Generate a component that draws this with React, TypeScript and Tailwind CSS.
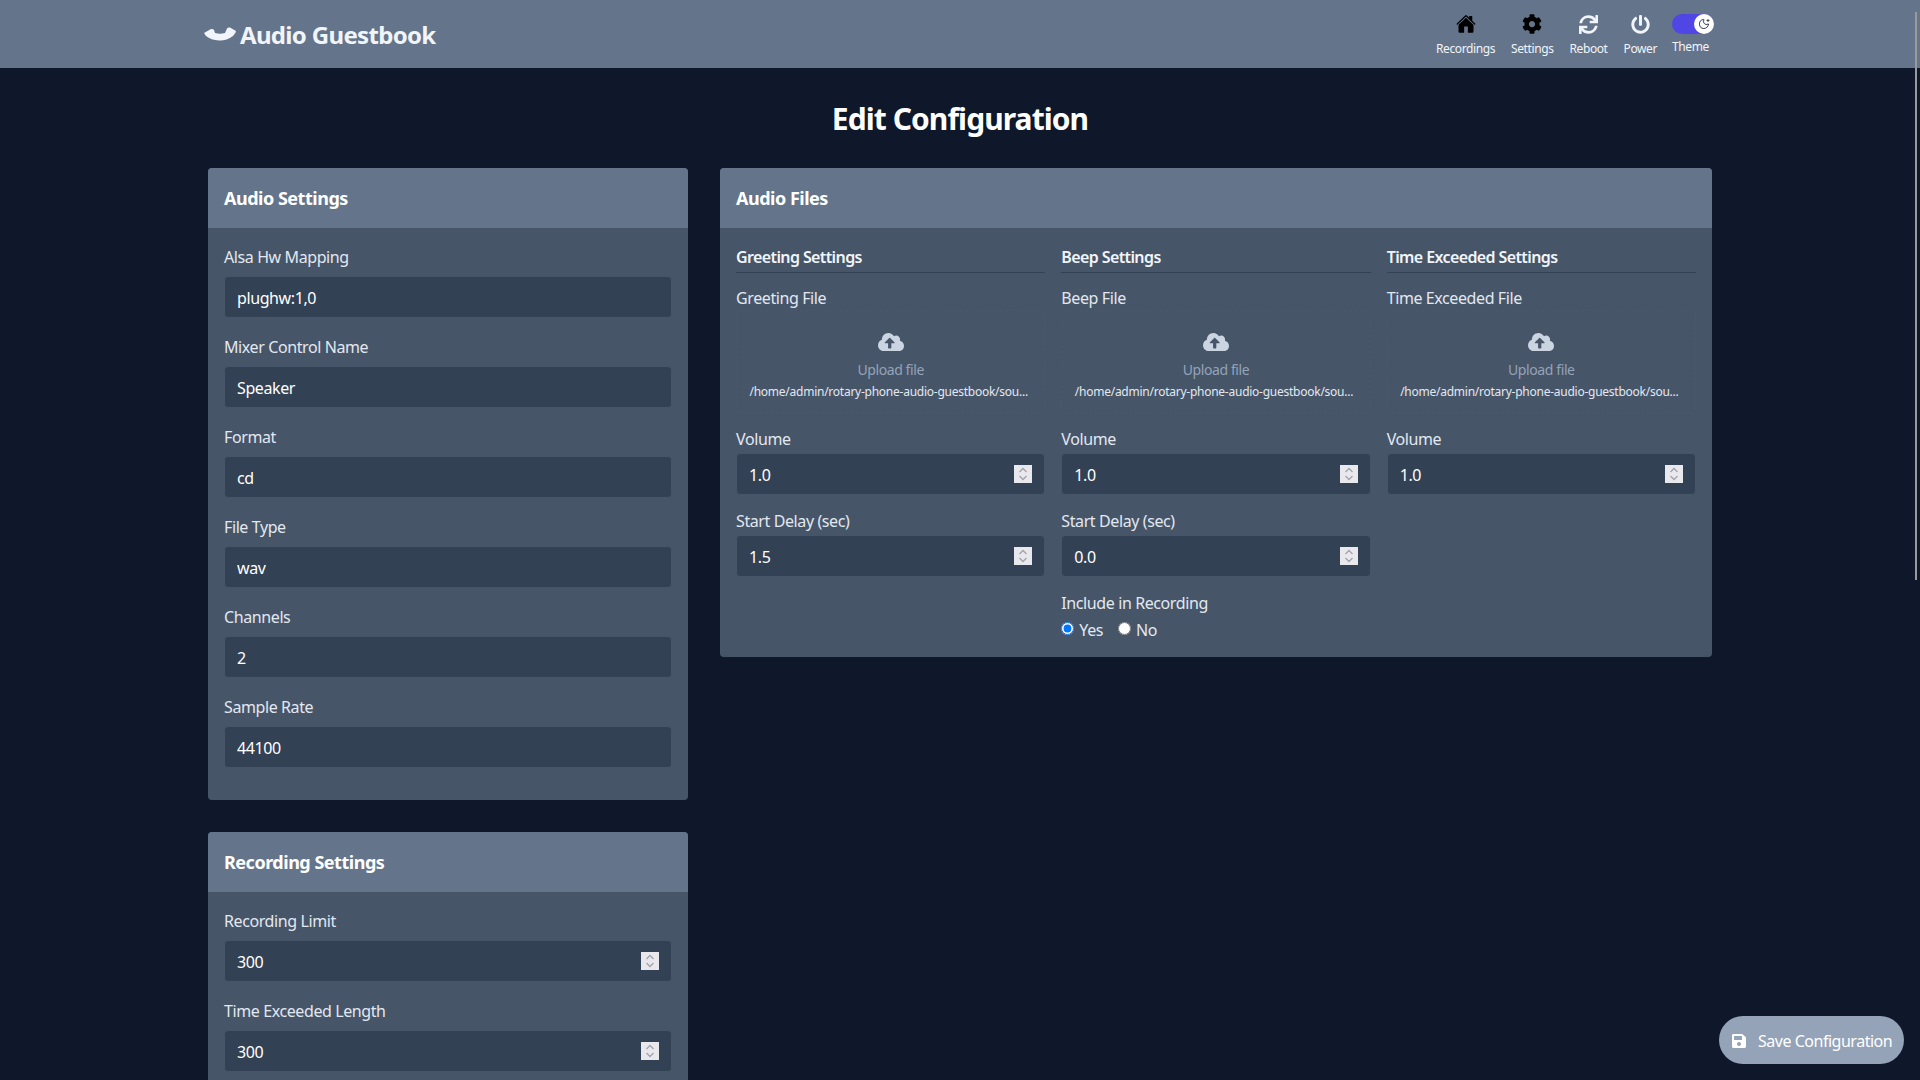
import React from "react";
import { FaCog, FaSync, FaPowerOff, FaSave, FaCloudUploadAlt } from "react-icons/fa";
import { IoHome } from "react-icons/io5";
import { MoonStar } from "lucide-react";

function Spinner() {
  return (
    <span className="absolute right-[13px] top-1/2 -translate-y-1/2 w-[18px] h-[18px] bg-[#e9e9ed] flex items-center justify-center">
      <svg width="12" height="16" viewBox="0 0 12 16" fill="none" stroke="#a3a3ab" strokeWidth="1.3">
        <path d="M2.5 6 L6 2.5 L9.5 6" />
        <path d="M2.5 10 L6 13.5 L9.5 10" />
      </svg>
    </span>
  );
}

function Field({ label, value, spin, gap = "pt-[1px] mb-[7px]", after = "mb-4" }: { label: string; value: string; spin?: boolean; gap?: string; after?: string }) {
  return (
    <div className={after}>
      <label className={`block text-[#e2e8f0] text-base leading-6 ${gap}`}>{label}</label>
      <div className="relative h-[42px]">
        <input readOnly value={value} className="w-full h-[42px] rounded bg-[#334155] border border-[#475569] px-3 pt-[2px] text-white text-base outline-none" />
        {spin && <Spinner />}
      </div>
    </div>
  );
}

function Card({ title, children }: { title: string; children: React.ReactNode }) {
  return (
    <section className="rounded overflow-hidden bg-[#475569]">
      <h2 className="bg-[#64748b] p-4 text-lg leading-7 font-bold tracking-[-0.027em] text-white">{title}</h2>
      <div className="p-4">{children}</div>
    </section>
  );
}

function Column({ title, file, delay, children }: { title: string; file: string; delay?: string; children?: React.ReactNode }) {
  return (
    <div>
      <h3 className="text-base leading-6 font-semibold tracking-[-0.038em] text-[#f1f5f9] pt-[1px] pb-[3px] border-b border-[#334155] mb-3">{title}</h3>
      <label className="block text-[#e2e8f0] text-base leading-6 pt-[1px]">{file}</label>
      <div className="h-[103px] mb-[14px] flex flex-col items-center rounded border border-dashed border-[#4b586b]">
        <FaCloudUploadAlt className="text-[#cbd5e1] mt-[18px]" size={26} />
        <span className="text-sm leading-5 text-[#94a3b8] mt-[5px]">Upload file</span>
        <span className="text-xs leading-4 tracking-[-0.021em] text-[#e2e8f0] mt-[4px] pr-[4px]">/home/admin/rotary-phone-audio-guestbook/sou...</span>
      </div>
      <Field label="Volume" value="1.0" spin gap="mb-[2px]" after="mb-3.5" />
      {delay && <Field label="Start Delay (sec)" value={delay} spin gap="mb-[2px]" after="mb-3.5" />}
      {children}
    </div>
  );
}

function NavItem({ icon, label }: { icon: React.ReactNode; label: string }) {
  return (
    <a className="flex flex-col items-center">
      <span className="h-[20px] flex items-center justify-center">{icon}</span>
      <span className="text-xs leading-4 text-[#f1f5f9] mt-[7px]">{label}</span>
    </a>
  );
}

export default function App() {
  return (
    <div className="h-screen overflow-hidden bg-[#0f172a] tracking-[-0.025em] font-['Noto_Sans','Liberation_Sans',sans-serif]">
      <nav className="h-[68px] bg-[#64748b]">
        <div className="max-w-[1536px] mx-auto px-4 h-full flex items-center justify-between">
          <div className="flex items-center gap-[4px] -ml-[4px]">
            <svg width="32" height="14" viewBox="0 0 32 14" fill="#f1f5f9">
              <path d="M0 6 L7 2 Q9 1.5 10 3 L11 6 Q16 7.5 21 6 L23 1.5 Q24 0 26 0.5 L32 4 Q32 6 29 9 Q22 14 15 13.5 Q7 13 2 9 Z" />
            </svg>
            <span className="text-2xl font-bold tracking-[-0.028em] text-[#f1f5f9] pt-[2px]">Audio Guestbook</span>
          </div>
          <div className="flex items-start gap-4 pt-[3px]">
            <NavItem icon={<IoHome className="text-black" size={20} />} label="Recordings" />
            <NavItem icon={<FaCog className="text-black" size={20} />} label="Settings" />
            <NavItem icon={<FaSync className="text-[#f1f5f9]" size={19} />} label="Reboot" />
            <NavItem icon={<FaPowerOff className="text-[#f1f5f9]" size={19} />} label="Power" />
            <div className="flex flex-col items-start w-[40px] -ml-[1px]">
              <div className="w-[42px] h-[20px] shrink-0 rounded-full bg-[#4f46e5] relative">
                <span className="absolute right-0 top-0 w-[20px] h-[20px] rounded-full bg-white flex items-center justify-center">
                  <MoonStar size={12} strokeWidth={2} className="text-[#374151]" />
                </span>
              </div>
              <span className="text-xs leading-4 text-[#f1f5f9] mt-[5px]">Theme</span>
            </div>
          </div>
        </div>
      </nav>

      <main className="max-w-[1536px] mx-auto px-4 pt-[33px]">
        <h1 className="text-3xl leading-9 font-bold tracking-[-0.031em] text-white text-center mb-[31px]">Edit Configuration</h1>
        <div className="grid grid-cols-3 gap-8 items-start">
          <div className="flex flex-col gap-8">
            <Card title="Audio Settings">
              <Field label="Alsa Hw Mapping" value="plughw:1,0" />
              <Field label="Mixer Control Name" value="Speaker" />
              <Field label="Format" value="cd" />
              <Field label="File Type" value="wav" />
              <Field label="Channels" value="2" />
              <Field label="Sample Rate" value="44100" />
            </Card>
            <Card title="Recording Settings">
              <Field label="Recording Limit" value="300" spin />
              <Field label="Time Exceeded Length" value="300" spin />
            </Card>
          </div>
          <div className="col-span-2">
            <Card title="Audio Files">
              <div className="grid grid-cols-3 gap-4">
                <Column title="Greeting Settings" file="Greeting File" delay="1.5" />
                <Column title="Beep Settings" file="Beep File" delay="0.0">
                  <label className="block text-[#e2e8f0] text-base leading-6 mb-[2px]">Include in Recording</label>
                  <div className="flex items-center h-[24px] text-[#e2e8f0] text-base">
                    <input type="radio" name="inc" defaultChecked className="w-[13px] h-[13px] mb-[2px]" />
                    <span className="ml-[5px] pt-[1px]">Yes</span>
                    <input type="radio" name="inc" className="w-[13px] h-[13px] ml-[15px] mb-[2px]" />
                    <span className="ml-[5px] pt-[1px]">No</span>
                  </div>
                </Column>
                <Column title="Time Exceeded Settings" file="Time Exceeded File" />
              </div>
            </Card>
          </div>
        </div>
      </main>

      <button className="fixed right-4 bottom-4 h-[48px] w-[185px] rounded-full bg-[#94a3b8] text-white text-base tracking-[-0.03em] flex items-center pl-3 gap-[11px]">
        <FaSave size={16} className="mt-[1px]" />
        <span className="pt-[2px]">Save Configuration</span>
      </button>
      <div className="fixed right-[3px] top-[12px] w-[2px] h-[568px] bg-[#9a9a9a]" />
    </div>
  );
}
